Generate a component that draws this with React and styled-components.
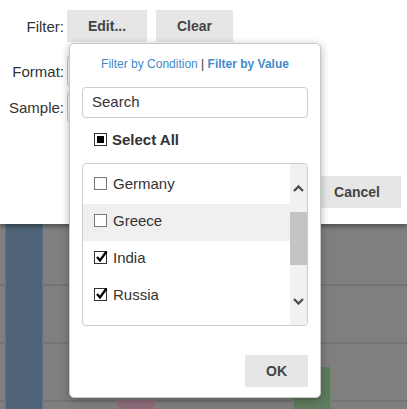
import React from "react";
import styled, { createGlobalStyle } from "styled-components";

const GlobalStyle = createGlobalStyle`
  body {
    margin: 0;
    font-family: "Liberation Sans", Arial, sans-serif;
    color: #333;
  }
`;

const Page = styled.div`
  position: relative;
  width: 407px;
  height: 409px;
  overflow: hidden;
  display: flex;
  flex-direction: column;
  background: #7f7f7f;
`;

const Panel = styled.div`
  position: relative;
  z-index: 2;
  height: 224px;
  box-sizing: border-box;
  padding: 10px 6px 0 0;
  background: #fff;
  box-shadow: 0 2px 5px rgba(0, 0, 0, 0.45);
`;

const FormRow = styled.div`
  display: grid;
  grid-template-columns: 64px 1fr;
  column-gap: 3px;
  align-items: center;
  margin-top: ${(p) => p.$top || 0}px;
`;

const Label = styled.span`
  text-align: right;
  font-size: 15px;
  color: #333;
`;

const Buttons = styled.div`
  display: flex;
  gap: 9px;
`;

const Button = styled.button`
  height: 32px;
  width: ${(p) => p.$w}px;
  border: none;
  background: #e6e6e6;
  font-family: "Liberation Sans", Arial, sans-serif;
  font-size: 14px;
  font-weight: bold;
  color: #444;
  padding: 0;
`;

const Field = styled.div`
  height: 30px;
  width: 200px;
  box-sizing: border-box;
  border: 1px solid #ccc;
  border-radius: 3px;
`;

const Footer = styled.div`
  display: flex;
  justify-content: flex-end;
  margin-top: 54px;
`;

const Chart = styled.div`
  flex: 1;
  display: flex;
  align-items: flex-end;
  background-color: #7f7f7f;
  background-image: linear-gradient(#737373, #737373), linear-gradient(#737373, #737373),
    linear-gradient(#737373, #737373);
  background-size: 100% 2px;
  background-repeat: no-repeat;
  background-position: 0 60px, 0 118px, 0 176px;
`;

const Bar = styled.div`
  width: 38px;
  height: ${(p) => p.$h}px;
  margin-left: ${(p) => p.$gap}px;
  background: ${(p) => p.$color};
  border-left: 1px solid ${(p) => p.$edge};
  border-right: 1px solid ${(p) => p.$edge};
  box-sizing: border-box;
`;

const Popup = styled.div`
  position: absolute;
  z-index: 3;
  left: 69px;
  top: 43px;
  width: 252px;
  height: 355px;
  box-sizing: border-box;
  padding: 0 12px 10px;
  display: flex;
  flex-direction: column;
  background: #fff;
  border: 1px solid #c8c8c8;
  border-radius: 5px;
  box-shadow: 0 2px 8px rgba(0, 0, 0, 0.3);
`;

const Tabs = styled.div`
  height: 40px;
  margin-bottom: 3px;
  display: flex;
  align-items: center;
  justify-content: center;
  font-size: 12px;
  color: #333;
  white-space: pre;
`;

const TabLink = styled.span`
  color: #428bca;
  font-weight: ${(p) => (p.$active ? "bold" : "normal")};
`;

const Search = styled.input`
  height: 31px;
  box-sizing: border-box;
  border: 1px solid #ccc;
  border-radius: 4px;
  padding: 0 9px 2px;
  font-family: "Liberation Sans", Arial, sans-serif;
  font-size: 15px;
  outline: none;
  &::placeholder {
    color: #333;
  }
`;

const SelectAll = styled.div`
  height: 45px;
  display: flex;
  align-items: center;
  gap: 5px;
  padding: 0 0 2px 12px;
  box-sizing: border-box;
  font-size: 15px;
  font-weight: bold;
  color: #333;
`;

const Box = styled.span`
  position: relative;
  width: 13px;
  height: 13px;
  box-sizing: border-box;
  border: 1px solid ${(p) => (p.$dark ? "#333" : "#777")};
  background: #fff;
  flex-shrink: 0;
  display: flex;
  align-items: center;
  justify-content: center;
`;

const Fill = styled.span`
  width: 7px;
  height: 7px;
  background: #000;
`;

const Check = styled.svg`
  position: absolute;
  left: 0px;
  top: -2px;
  overflow: visible;
`;

const List = styled.div`
  height: 163px;
  box-sizing: border-box;
  border: 1px solid #ccc;
  border-radius: 4px;
  display: flex;
  overflow: hidden;
`;

const Items = styled.div`
  flex: 1;
  padding-top: 3px;
  overflow: hidden;
`;

const Item = styled.div`
  height: 37px;
  box-sizing: border-box;
  display: flex;
  align-items: center;
  gap: 6px;
  padding: 0 0 4px 11px;
  font-size: 15px;
  color: #333;
  background: ${(p) => (p.$hover ? "#f0f0f0" : "transparent")};
`;

const Scroll = styled.div`
  width: 17px;
  display: flex;
  flex-direction: column;
  background: #f1f1f1;
`;

const Arrow = styled.div`
  height: 48px;
  flex-shrink: 0;
  display: flex;
  align-items: center;
  justify-content: center;
`;

const Thumb = styled.div`
  height: 54px;
  margin-bottom: 12px;
  background: #c4c4c4;
`;

const PopupFooter = styled.div`
  margin-top: auto;
  display: flex;
  justify-content: flex-end;
`;

const Chevron = ({ up }) => (
  <svg width="11" height="7" viewBox="0 0 11 7">
    <polyline
      points={up ? "1,6 5.5,1.5 10,6" : "1,1 5.5,5.5 10,1"}
      fill="none"
      stroke="#4f4f4f"
      strokeWidth="2.4"
    />
  </svg>
);

const CheckBox = ({ checked }) => (
  <Box $dark={checked}>
    {checked && (
      <Check width="13" height="13" viewBox="0 0 13 13">
        <polyline points="2,7 5,10.5 11.5,1.5" fill="none" stroke="#000" strokeWidth="2.3" />
      </Check>
    )}
  </Box>
);

const countries = [
  { name: "Germany", checked: false },
  { name: "Greece", checked: false, hover: true },
  { name: "India", checked: true },
  { name: "Russia", checked: true },
];

export default function App() {
  return (
    <Page>
      <GlobalStyle />
      <Panel>
        <FormRow>
          <Label>Filter:</Label>
          <Buttons>
            <Button $w={80}>Edit...</Button>
            <Button $w={77}>Clear</Button>
          </Buttons>
        </FormRow>
        <FormRow $top={14}>
          <Label>Format:</Label>
          <Field />
        </FormRow>
        <FormRow $top={6}>
          <Label>Sample:</Label>
          <Field />
        </FormRow>
        <Footer>
          <Button $w={88}>Cancel</Button>
        </Footer>
      </Panel>

      <Chart>
        <Bar $gap={5} $h={185} $color="#4f6478" $edge="#5b7590" />
        <Bar $gap={74} $h={9} $color="#8a6b79" $edge="#95727f" />
        <Bar $gap={138} $h={42} $color="#5e7c5e" $edge="#688a68" />
      </Chart>

      <Popup>
        <Tabs>
          <TabLink>Filter by Condition</TabLink>
          {" | "}
          <TabLink $active>Filter by Value</TabLink>
        </Tabs>
        <Search placeholder="Search" />
        <SelectAll>
          <Box $dark>
            <Fill />
          </Box>
          Select All
        </SelectAll>
        <List>
          <Items>
            {countries.map((c) => (
              <Item key={c.name} $hover={c.hover}>
                <CheckBox checked={c.checked} />
                {c.name}
              </Item>
            ))}
            <Item>
              <CheckBox />
            </Item>
          </Items>
          <Scroll>
            <Arrow>
              <Chevron up />
            </Arrow>
            <Thumb />
            <Arrow>
              <Chevron />
            </Arrow>
          </Scroll>
        </List>
        <PopupFooter>
          <Button $w={63}>OK</Button>
        </PopupFooter>
      </Popup>
    </Page>
  );
}
